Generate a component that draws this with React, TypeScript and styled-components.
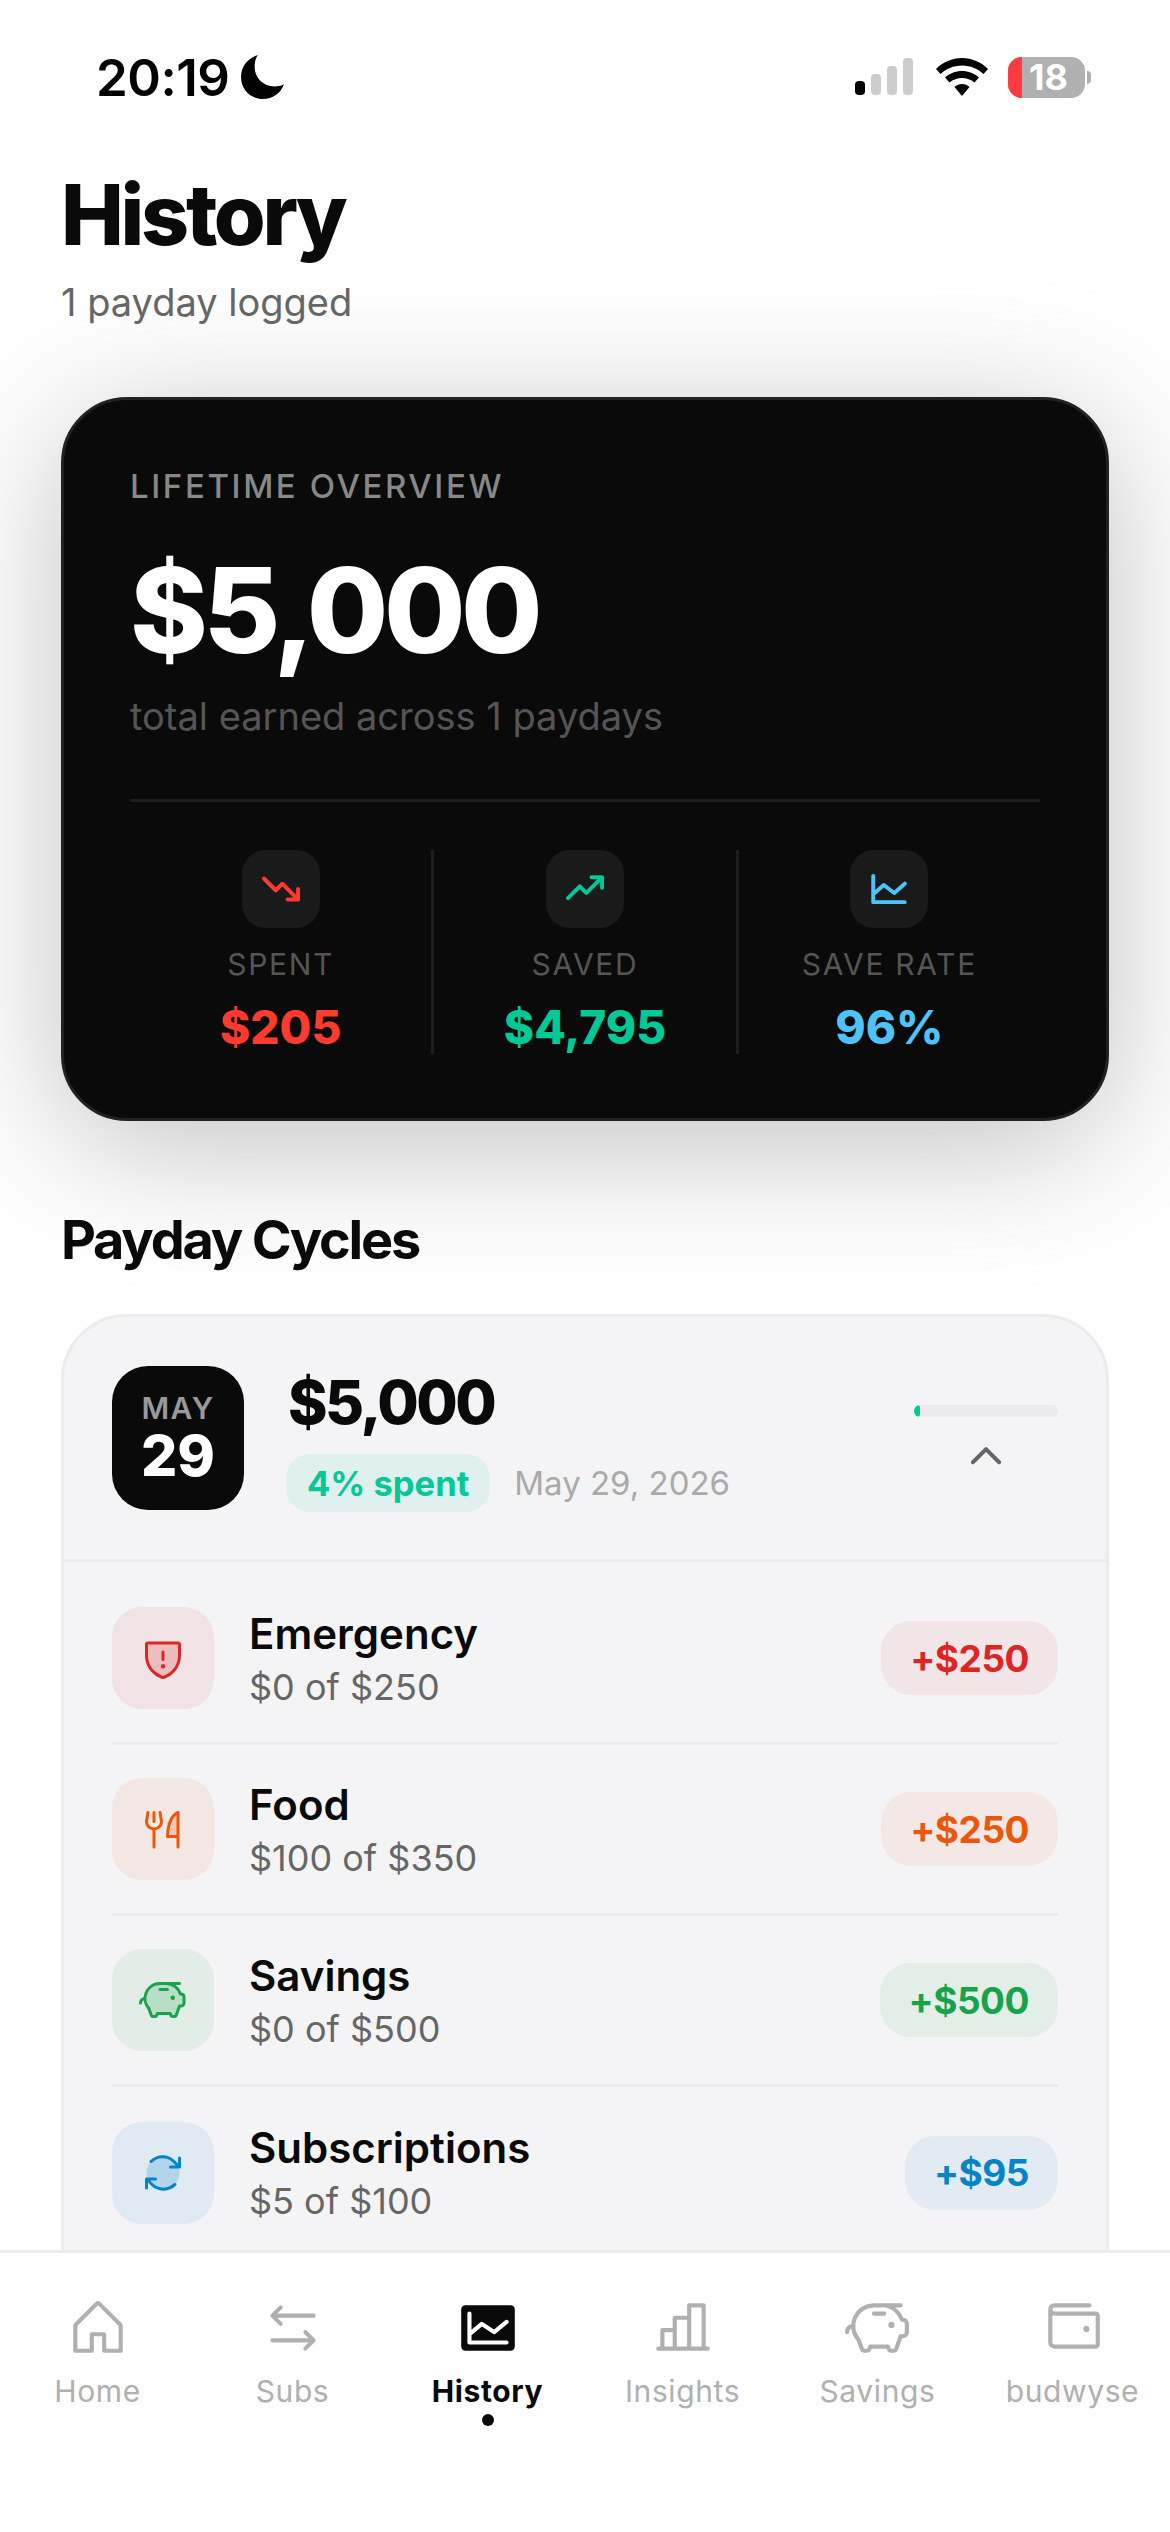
import { Fragment } from "react";
import styled, { createGlobalStyle } from "styled-components";
import type { ComponentType } from "react";
import {
  PiArrowsClockwiseDuotone,
  PiArrowsLeftRight,
  PiCaretUpBold,
  PiChartBar,
  PiChartLineBold,
  PiChartLineFill,
  PiForkKnifeDuotone,
  PiHouse,
  PiPiggyBank,
  PiPiggyBankDuotone,
  PiShieldWarningDuotone,
  PiTrendDownBold,
  PiTrendUpBold,
  PiWallet,
} from "react-icons/pi";

const GlobalStyle = createGlobalStyle`
  * {
    box-sizing: border-box;
  }
  html, body {
    margin: 0;
    padding: 0;
    background: #fff;
    font-family: Inter, "Liberation Sans", sans-serif;
    color: #0a0a0a;
  }
`;

const Screen = styled.div`
  width: 1170px;
  height: 2532px;
  display: flex;
  flex-direction: column;
  overflow: hidden;
  background: #fff;
`;
const Scroll = styled.main`
  flex: 1;
  min-height: 0;
  overflow: hidden;
  padding: 0 61px;
`;

const StatusBar = styled.div`
  height: 164px;
  margin: 0 -61px;
  padding: 50px 79px 0 96px;
  display: flex;
  justify-content: space-between;
  align-items: flex-start;
`;
const Clock = styled.div`
  display: flex;
  align-items: center;
  gap: 12px;
  height: 54px;
  font-size: 51px;
  font-weight: 600;
  letter-spacing: -0.5px;
  color: #000;
`;
const StatusIcons = styled.div`
  display: flex;
  align-items: center;
  gap: 20px;
  height: 54px;
  svg:first-child {
    margin-right: 3px;
  }
`;
const Battery = styled.div`
  position: relative;
  width: 77px;
  height: 41px;
  border-radius: 14px;
  overflow: hidden;
  background: #b0b0b0;
  display: flex;
  align-items: center;
  justify-content: center;
  padding-left: 4px;
  color: #fff;
  font-size: 36px;
  font-weight: 700;
`;
const BatteryLevel = styled.span`
  position: absolute;
  top: 0;
  bottom: 0;
  left: 0;
  width: 14px;
  background: #ff3b3f;
`;
const BatteryText = styled.span`
  position: relative;
`;
const BatteryWrap = styled.div`
  display: flex;
  align-items: center;
  gap: 2px;
`;
const BatteryNub = styled.span`
  width: 4px;
  height: 13px;
  border-radius: 0 7px 7px 0;
  background: #b0b0b0;
`;

const Title = styled.h1`
  margin: 0;
  font-size: 84px;
  line-height: 102px;
  font-weight: 800;
  letter-spacing: -3.3px;
`;
const Subtitle = styled.p`
  margin: 12px 0 0;
  font-size: 38px;
  line-height: 48px;
  color: #666;
`;

const OverviewCard = styled.section`
  margin-top: 71px;
  height: 724px;
  padding: 66px 66px 0;
  background: #0a0a0a;
  border: 3px solid #222;
  border-radius: 66px;
  box-shadow: 0 24px 140px rgba(0, 0, 0, 0.25);
`;
const Eyebrow = styled.div`
  font-size: 33px;
  line-height: 40px;
  font-weight: 500;
  letter-spacing: 2.6px;
  color: #888;
`;
const BigAmount = styled.div`
  margin-top: 35px;
  font-size: 118px;
  line-height: 138px;
  font-weight: 800;
  letter-spacing: -4.5px;
  color: #fff;
`;
const CardNote = styled.div`
  margin-top: 15px;
  font-size: 38px;
  line-height: 44px;
  color: #555;
`;
const CardRule = styled.div`
  height: 3px;
  margin-top: 61px;
  background: #1e1e1e;
`;
const Stats = styled.div`
  margin-top: 48px;
  height: 204px;
  display: flex;
`;
const Stat = styled.div`
  flex: 1;
  display: flex;
  flex-direction: column;
  align-items: center;
`;
const StatDivider = styled.div`
  width: 3px;
  background: #1e1e1e;
`;
const StatIcon = styled.div<{ $color: string }>`
  width: 78px;
  height: 78px;
  border-radius: 24px;
  background: #1a1a1a;
  display: flex;
  align-items: center;
  justify-content: center;
  color: ${(p) => p.$color};
  font-size: 42px;
`;
const StatLabel = styled.div`
  margin-top: 18px;
  font-size: 30px;
  line-height: 36px;
  letter-spacing: 1.7px;
  color: #555;
`;
const StatValue = styled.div<{ $color: string }>`
  margin-top: 18px;
  font-size: 46px;
  line-height: 54px;
  font-weight: 800;
  color: ${(p) => p.$color};
`;

const SectionTitle = styled.h2`
  margin: 86px 0 0;
  font-size: 54px;
  line-height: 66px;
  font-weight: 700;
  letter-spacing: -2.2px;
`;

const CyclePanel = styled.section`
  margin-top: 41px;
  height: 1200px;
  background: #f4f4f6;
  border: 3px solid #ebebee;
  border-radius: 66px;
`;
const CycleHead = styled.div`
  height: 245px;
  padding: 49px 48px 0;
  display: flex;
  align-items: flex-start;
  border-bottom: 3px solid #ebebee;
`;
const DateTile = styled.div`
  width: 132px;
  height: 144px;
  border-radius: 36px;
  background: #0a0a0a;
  display: flex;
  flex-direction: column;
  align-items: center;
  justify-content: center;
`;
const DateMonth = styled.div`
  font-size: 30px;
  line-height: 36px;
  font-weight: 600;
  letter-spacing: 1.5px;
  color: #999;
`;
const DateDay = styled.div`
  font-size: 57px;
  line-height: 60px;
  font-weight: 800;
  color: #fff;
`;
const CycleInfo = styled.div`
  margin-left: 42px;
  flex: 1;
`;
const CycleAmount = styled.div`
  margin-left: 2px;
  font-size: 60px;
  line-height: 72px;
  font-weight: 800;
  letter-spacing: -2.5px;
`;
const CycleMeta = styled.div`
  margin-top: 16px;
  display: flex;
  align-items: center;
  gap: 24px;
`;
const SpentBadge = styled.span`
  height: 58px;
  padding: 0 21px;
  border-radius: 24px;
  display: flex;
  align-items: center;
  background: #e0f0ee;
  color: #00c896;
  font-size: 34.5px;
  font-weight: 700;
`;
const CycleDate = styled.span`
  font-size: 33px;
  color: #aaa;
`;
const CycleSide = styled.div`
  width: 144px;
  padding-top: 39px;
  display: flex;
  flex-direction: column;
  align-items: center;
  gap: 19px;
  color: #666;
  font-size: 42px;
`;
const Track = styled.div`
  width: 100%;
  height: 12px;
  border-radius: 6px;
  overflow: hidden;
  background: #ebebee;
`;
const TrackFill = styled.div`
  height: 100%;
  border-radius: 6px;
  background: #00c896;
`;

const RowList = styled.div`
  padding: 12px 48px 0;
`;
const Row = styled.div`
  height: 171px;
  display: flex;
  align-items: center;
  gap: 35px;
  border-bottom: 3px solid #ebebee;
  &:last-child {
    border-bottom: none;
  }
`;
const RowIcon = styled.div<{ $color: string }>`
  width: 102px;
  height: 102px;
  flex: none;
  border-radius: 30px;
  display: flex;
  align-items: center;
  justify-content: center;
  font-size: 48px;
  color: ${(p) => p.$color};
  background: ${(p) => p.$color}14;
`;
const RowText = styled.div`
  flex: 1;
`;
const RowName = styled.div`
  font-size: 42px;
  line-height: 54px;
  font-weight: 600;
`;
const RowSub = styled.div`
  margin-top: 3px;
  font-size: 36px;
  line-height: 46px;
  color: #666;
`;
const Chip = styled.div<{ $color: string }>`
  height: 74px;
  padding: 0 29px;
  border-radius: 30px;
  display: flex;
  align-items: center;
  font-size: 37px;
  font-weight: 700;
  letter-spacing: -0.5px;
  color: ${(p) => p.$color};
  background: ${(p) => p.$color}12;
`;

const BottomNav = styled.nav`
  height: 282px;
  flex: none;
  display: grid;
  grid-template-columns: repeat(6, 1fr);
  background: #fff;
  border-top: 3px solid #ebebee;
  padding-top: 42px;
`;
const NavItem = styled.div<{ $active?: boolean }>`
  display: flex;
  flex-direction: column;
  align-items: center;
  color: ${(p) => (p.$active ? "#0a0a0a" : "#b0b0b0")};
  font-size: 66px;
  svg {
    display: block;
  }
`;
const NavLabel = styled.div<{ $active?: boolean }>`
  margin-top: 12px;
  font-size: 30px;
  line-height: 36px;
  font-weight: ${(p) => (p.$active ? 700 : 400)};
  letter-spacing: 0.6px;
`;
const NavDot = styled.span`
  width: 12px;
  height: 12px;
  margin-top: 5px;
  border-radius: 50%;
  background: #0a0a0a;
`;

type StatItem = {
  label: string;
  value: string;
  color: string;
  Icon: ComponentType;
};
const stats: StatItem[] = [
  { label: "SPENT", value: "$205", color: "#ff3b30", Icon: PiTrendDownBold },
  { label: "SAVED", value: "$4,795", color: "#00c896", Icon: PiTrendUpBold },
  { label: "SAVE RATE", value: "96%", color: "#4fc3f7", Icon: PiChartLineBold },
];

const rows = [
  { name: "Emergency", sub: "$0 of $250", amount: "+$250", color: "#dc2626", Icon: PiShieldWarningDuotone },
  { name: "Food", sub: "$100 of $350", amount: "+$250", color: "#ea580c", Icon: PiForkKnifeDuotone },
  { name: "Savings", sub: "$0 of $500", amount: "+$500", color: "#16a34a", Icon: PiPiggyBankDuotone },
  { name: "Subscriptions", sub: "$5 of $100", amount: "+$95", color: "#0284c7", Icon: PiArrowsClockwiseDuotone },
];

const navItems = [
  { label: "Home", Icon: PiHouse },
  { label: "Subs", Icon: PiArrowsLeftRight },
  { label: "History", Icon: PiChartLineFill, active: true },
  { label: "Insights", Icon: PiChartBar },
  { label: "Savings", Icon: PiPiggyBank },
  { label: "budwyse", Icon: PiWallet },
];

const Signal = () => (
  <svg width="58" height="38" viewBox="0 0 58 38">
    <rect x="0" y="23" width="10" height="14" rx="4" fill="#000" />
    <rect x="16" y="16" width="10" height="21" rx="4" fill="#ccc" />
    <rect x="32" y="8" width="10" height="29" rx="4" fill="#ccc" />
    <rect x="48" y="0" width="10" height="37" rx="4" fill="#ccc" />
  </svg>
);

const Wifi = () => (
  <svg width="52" height="38" viewBox="0 0 52 38">
    <path d="M26 0C16 0 7 4 0 11l4.500 5C10 11 17.500 7.500 26 7.500S42 11 47.500 16l4.500-5C45 4 36 0 26 0Z" fill="#000" />
    <path d="M26 13c-6.500 0-12.500 2.500-17 6.500l4.500 5C17 21.500 21.500 20 26 20s9 1.500 12.500 4.500l4.500-5C38.500 15.500 32.500 13 26 13Z" fill="#000" />
    <path d="M26 26c-3 0-5.500 1-7.500 3L26 38l7.500-9c-2-2-4.500-3-7.500-3Z" fill="#000" />
  </svg>
);

const Moon = () => (
  <svg width="44" height="46" viewBox="0 0 42 44">
    <path d="M16 1C6 4 0 12 0 22c0 12 9 21 21 21 9 0 17-5 20-14-3 2-6 2-9 2C21 31 13 23 13 12c0-4 1-8 3-11Z" fill="#000" />
  </svg>
);

const App = () => {
  return (
    <Screen>
      <GlobalStyle />
      <Scroll>
        <StatusBar>
          <Clock>
            20:19
            <Moon />
          </Clock>
          <StatusIcons>
            <Signal />
            <Wifi />
            <BatteryWrap>
              <Battery>
                <BatteryLevel />
                <BatteryText>18</BatteryText>
              </Battery>
              <BatteryNub />
            </BatteryWrap>
          </StatusIcons>
        </StatusBar>

        <Title>History</Title>
        <Subtitle>1 payday logged</Subtitle>

        <OverviewCard>
          <Eyebrow>LIFETIME OVERVIEW</Eyebrow>
          <BigAmount>$5,000</BigAmount>
          <CardNote>total earned across 1 paydays</CardNote>
          <CardRule />
          <Stats>
            {stats.map(({ label, value, color, Icon }, i) => (
              <Fragment key={label}>
                {i > 0 && <StatDivider />}
                <Stat>
                  <StatIcon $color={color}>
                    <Icon />
                  </StatIcon>
                  <StatLabel>{label}</StatLabel>
                  <StatValue $color={color}>{value}</StatValue>
                </Stat>
              </Fragment>
            ))}
          </Stats>
        </OverviewCard>

        <SectionTitle>Payday Cycles</SectionTitle>
        <CyclePanel>
          <CycleHead>
            <DateTile>
              <DateMonth>MAY</DateMonth>
              <DateDay>29</DateDay>
            </DateTile>
            <CycleInfo>
              <CycleAmount>$5,000</CycleAmount>
              <CycleMeta>
                <SpentBadge>4% spent</SpentBadge>
                <CycleDate>May 29, 2026</CycleDate>
              </CycleMeta>
            </CycleInfo>
            <CycleSide>
              <Track>
                <TrackFill style={{ width: `${(205 / 5000) * 100}%` }} />
              </Track>
              <PiCaretUpBold />
            </CycleSide>
          </CycleHead>
          <RowList>
            {rows.map(({ name, sub, amount, color, Icon }) => (
              <Row key={name}>
                <RowIcon $color={color}>
                  <Icon />
                </RowIcon>
                <RowText>
                  <RowName>{name}</RowName>
                  <RowSub>{sub}</RowSub>
                </RowText>
                <Chip $color={color}>{amount}</Chip>
              </Row>
            ))}
          </RowList>
        </CyclePanel>
      </Scroll>
      <BottomNav>
        {navItems.map(({ label, Icon, active }) => (
          <NavItem key={label} $active={active}>
            <Icon />
            <NavLabel $active={active}>{label}</NavLabel>
            {active && <NavDot />}
          </NavItem>
        ))}
      </BottomNav>
    </Screen>
  );
};

export default App;
